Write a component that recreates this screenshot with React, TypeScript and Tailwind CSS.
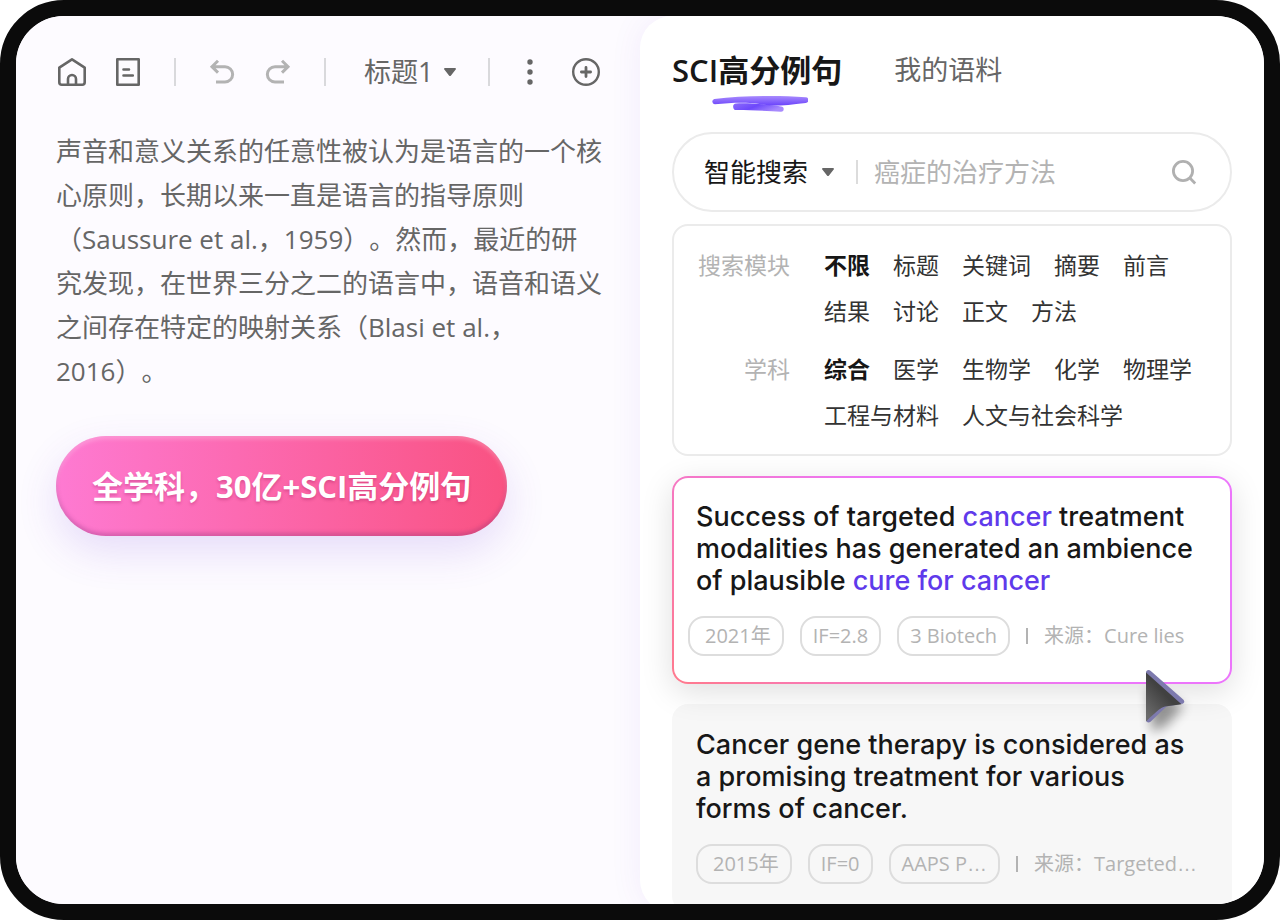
import React from 'react';

const scopeOptions = ['不限', '标题', '关键词', '摘要', '前言', '结果', '讨论', '正文', '方法'];
const subjectOptions = ['综合', '医学', '生物学', '化学', '物理学', '工程与材料', '人文与社会科学'];

function Divider({ className = 'mx-[6px]' }: { className?: string }) {
  return <span className={`h-7 w-[2px] shrink-0 bg-[#d9d9dc] ${className}`} />;
}

function IconButton({ label, className = '', children }: { label: string; className?: string; children: React.ReactNode }) {
  return (
    <button type="button" aria-label={label} className={`size-8 shrink-0 ${className}`}>
      <svg viewBox="0 0 32 32" className="size-8" fill="none" stroke="currentColor" strokeLinecap="round" strokeLinejoin="round">
        {children}
      </svg>
    </button>
  );
}

function Caret({ className }: { className: string }) {
  return (
    <svg viewBox="0 0 12 8" className={`pointer-events-none h-2 w-3 text-[#666] ${className}`} fill="currentColor">
      <path d="M1 0h10c.9 0 1.3.9.7 1.6L7 7.4a1.3 1.3 0 0 1-2 0L.3 1.6C-.3.9.1 0 1 0z" />
    </svg>
  );
}

function Toolbar() {
  return (
    <div className="flex items-center gap-6 text-[#666]">
      <IconButton label="主页">
        <path strokeWidth="2.6" d="M16 3.4 28.7 11.6V26.2a2.5 2.5 0 0 1-2.5 2.5H5.8a2.5 2.5 0 0 1-2.5-2.5V11.6z" />
        <path strokeWidth="2.6" d="M12 28.5V23a4 4 0 0 1 8 0v5.5" />
      </IconButton>
      <IconButton label="文档">
        <path strokeWidth="2.6" d="M5.3 3.3h21.4v25.4H5.3z" />
        <path strokeWidth="2.6" d="M11.5 13.5h5.5M11.5 19.5h9.3" />
      </IconButton>
      <Divider />
      <IconButton label="撤销" className="text-[#b3b3b3]">
        <path strokeWidth="3" strokeLinecap="butt" strokeLinejoin="miter" d="M6 10.7h13a7.6 7.6 0 0 1 0 15.3h-9M12 4.8l-6 5.9 6 5.9" />
      </IconButton>
      <IconButton label="重做" className="text-[#b3b3b3]">
        <path strokeWidth="3" strokeLinecap="butt" strokeLinejoin="miter" d="M26 10.7H13a7.6 7.6 0 0 0 0 15.3h9M20 4.8l6 5.9-6 5.9" />
      </IconButton>
      <Divider />
      <label className="relative ml-2 flex items-center">
        <select aria-label="段落样式" className="w-[94px] appearance-none bg-transparent text-[27px] leading-8 outline-none">
          <option>标题1</option>
        </select>
        <Caret className="absolute right-[2px]" />
      </label>
      <Divider className="ml-[6px]" />
      <IconButton label="更多">
        <g fill="currentColor" stroke="none">
          <circle cx="16" cy="6" r="2.7" />
          <circle cx="16" cy="16" r="2.7" />
          <circle cx="16" cy="26" r="2.7" />
        </g>
      </IconButton>
      <IconButton label="添加">
        <circle cx="16" cy="16" r="12.8" strokeWidth="2.4" />
        <path strokeWidth="2.8" d="M16 11.4v9.2M11.4 16h9.2" />
      </IconButton>
    </div>
  );
}

function Editor() {
  return (
    <section className="min-w-0 bg-[#fdfbff] pl-10 pt-10">
      <Toolbar />
      <p className="mt-[41px] whitespace-nowrap text-[26px] leading-[44px] text-[#666] [text-spacing-trim:space-all]">
        声音和意义关系的任意性被认为是语言的一个核
        <br />
        心原则，长期以来一直是语言的指导原则
        <br />
        （Saussure et al.，1959）。然而，最近的研
        <br />
        究发现，在世界三分之二的语言中，语音和语义
        <br />
        之间存在特定的映射关系（Blasi et al.，
        <br />
        2016）。
      </p>
      <button
        type="button"
        className="mt-[43px] h-[100px] whitespace-nowrap rounded-full bg-linear-to-r/srgb from-[#fe7ad2] to-[#f95282] px-9 text-[31px] font-bold text-white shadow-[0_16px_40px_rgba(110,60,220,0.16),inset_0_3px_4px_rgba(255,255,255,0.25),inset_0_-3px_4px_rgba(120,40,110,0.3)] [text-shadow:0_2px_3px_rgba(150,20,80,0.3)]"
      >
        全学科，30亿+SCI高分例句
      </button>
    </section>
  );
}

function Tabs() {
  return (
    <div className="flex items-center gap-[52px]">
      <button type="button" className="relative whitespace-nowrap text-[31px] leading-10 font-semibold text-[#171717]">
        SCI高分例句
        <svg viewBox="0 0 96 16" className="absolute left-10 top-[46px] h-4 w-24">
          <defs>
            <linearGradient id="stroke-a" x1="0" y1="0" x2="0" y2="1">
              <stop offset="0" stopColor="#a98bfd" />
              <stop offset="1" stopColor="#6a43fb" />
            </linearGradient>
            <linearGradient id="stroke-b" x1="0" y1="0" x2="1" y2="0.4">
              <stop offset="0" stopColor="#8d6cfc" />
              <stop offset="0.5" stopColor="#6d48fb" />
              <stop offset="1" stopColor="#a88afd" />
            </linearGradient>
          </defs>
          <path fill="url(#stroke-b)" d="M24 7.4C36 6.6 56 8.4 69 10.4a2.7 2.7 0 0 1 0 5.4C55 14.6 38 14.3 25 14a3.3 3.3 0 0 1-1-6.6z" />
          <path fill="url(#stroke-a)" d="M2.3 3C30-.6 66-.7 93.500 1.300a2.800 2.800 0 0 1 .2 5.600C80 8.600 72 9.400 60 9.500 50 9.300 48 7.500 38 7 24 6.500 14 7.400 2.800 8.300A2.700 2.700 0 0 1 2.300 3z" />
        </svg>
      </button>
      <button type="button" className="whitespace-nowrap text-[27px] leading-10 text-[#666]">
        我的语料
      </button>
    </div>
  );
}

function SearchBar() {
  return (
    <div className="mt-[42px] flex h-20 items-center rounded-full border-2 border-[#ebebeb] pl-[30px] pr-8">
      <label className="relative flex items-center">
        <select aria-label="搜索方式" className="w-[134px] appearance-none bg-transparent text-[26px] leading-9 text-[#171717] outline-none">
          <option>智能搜索</option>
        </select>
        <Caret className="absolute right-1" />
      </label>
      <span className="ml-[18px] h-6 w-[2px] shrink-0 bg-[#dcdcdc]" />
      <input
        type="text"
        aria-label="搜索内容"
        placeholder="癌症的治疗方法"
        className="ml-4 min-w-0 flex-1 bg-transparent text-[26px] leading-9 text-[#171717] outline-none placeholder:text-[#b3b3b3]"
      />
      <button type="button" aria-label="搜索" className="size-7 shrink-0">
        <svg viewBox="0 0 28 28" className="size-7" fill="none" stroke="#b0b0b0" strokeWidth="2.8">
          <circle cx="13" cy="13" r="9.6" />
          <path d="M19.600 19.800l5.600 5.600" />
        </svg>
      </button>
    </div>
  );
}

function FilterRow({ label, options }: { label: string; options: string[] }) {
  return (
    <div className="flex text-[23px] leading-[46px]">
      <span className="w-[94px] shrink-0 text-right text-[#b3b3b3]">{label}</span>
      <div className="ml-[34px] flex flex-wrap gap-x-[23px]">
        {options.map((option, i) => (
          <button
            key={option}
            type="button"
            aria-pressed={i === 0}
            className={i === 0 ? 'font-bold text-[#171717]' : 'text-[#333]'}
          >
            {option}
          </button>
        ))}
      </div>
    </div>
  );
}

function Clipped({ text }: { text: string }) {
  return (
    <span>
      {text}
      <span className="font-['Liberation_Sans',sans-serif]">…</span>
    </span>
  );
}

function Meta({ tags, source, className }: { tags: React.ReactNode[]; source: React.ReactNode; className: string }) {
  return (
    <div className={`mt-[19px] flex items-center whitespace-nowrap text-xl text-[#b3b3b3] ${className}`}>
      <div className="flex gap-4">
        {tags.map((tag, i) => (
          <span
            key={i}
            className={`flex h-10 items-center rounded-2xl border-2 border-[#dddddd] ${i === 0 ? 'pl-[15px] pr-[11px]' : 'px-[11px]'}`}
          >
            {tag}
          </span>
        ))}
      </div>
      <span className="mx-4 h-4 w-[2px] bg-[#b3b3b3]" />
      <span>来源：{source}</span>
    </div>
  );
}

function Pointer() {
  return (
    <svg viewBox="0 0 80 96" className="pointer-events-none absolute -bottom-[72px] right-[18px] z-10 h-24 w-20">
      <defs>
        <linearGradient id="pointer-fill" x1="0.2" y1="1" x2="0.6" y2="0.5">
          <stop offset="0" stopColor="#6a6a6a" />
          <stop offset="1" stopColor="#414141" />
        </linearGradient>
        <filter id="pointer-blur" x="-50%" y="-50%" width="200%" height="200%">
          <feGaussianBlur stdDeviation="6" />
        </filter>
      </defs>
      <path d="M16 30 52 48 34 68 20 74z" fill="#000" opacity="0.4" filter="url(#pointer-blur)" />
      <path d="M14 14.500C14 12 17 11.300 18.800 13L51.200 41.400c2 1.800 1 4-1.200 4.400L34.500 48.600 18.500 63.800C16.800 65 14 64.500 14 62z" fill="#7d7aae" />
      <path d="M14 14.500 49.500 46.300 33 48.500C29 49.500 26 52 14 63.500z" fill="url(#pointer-fill)" />
    </svg>
  );
}

const titleClass = "whitespace-nowrap text-[27px] leading-8 font-medium text-[#171717] font-['Inter',sans-serif]";

function Library() {
  return (
    <section className="min-w-0 rounded-[32px] bg-white px-8 pt-[34px] shadow-[0_0_32px_rgba(110,60,220,0.08)]">
      <Tabs />
      <SearchBar />
      <div className="mt-3 flex flex-col gap-3 rounded-2xl border-2 border-[#ebebeb] px-[22px] py-4">
        <FilterRow label="搜索模块" options={scopeOptions} />
        <FilterRow label="学科" options={subjectOptions} />
      </div>
      <article className="relative mt-5 rounded-2xl border-2 border-transparent pt-[23px] pb-[26px] shadow-[0_8px_32px_rgba(0,0,0,0.13)] [background:linear-gradient(#fff,#fff)_padding-box,linear-gradient(45deg,#ff7a8c,#ec75fb_55%)_border-box]">
        <h2 className={`px-[22px] ${titleClass}`}>
          Success of targeted <span className="text-[#5f3aeb]">cancer</span> treatment
          <br />
          modalities has generated an ambience
          <br />
          of plausible <span className="text-[#5f3aeb]">cure for cancer</span>
        </h2>
        <Meta className="pl-[14px]" tags={['2021年', 'IF=2.8', '3 Biotech']} source="Cure lies" />
        <Pointer />
      </article>
      <article className="mt-5 rounded-2xl bg-[#f7f7f7] px-6 pt-[25px] pb-7">
        <h2 className={titleClass}>
          Cancer gene therapy is considered as
          <br />
          a promising treatment for various
          <br />
          forms of cancer.
        </h2>
        <Meta className="" tags={['2015年', 'IF=0', <Clipped text="AAPS P" />]} source={<Clipped text="Targeted" />} />
      </article>
    </section>
  );
}

export default function App() {
  return (
    <div className="bg-white">
      <main
        lang="zh-CN"
        className="grid h-screen grid-cols-2 overflow-hidden rounded-[64px] border-[16px] border-[#0b0b0b] bg-[#fdfbff] font-['Open_Sans','Noto_Sans_CJK_SC',sans-serif]"
      >
        <Editor />
        <Library />
      </main>
    </div>
  );
}
